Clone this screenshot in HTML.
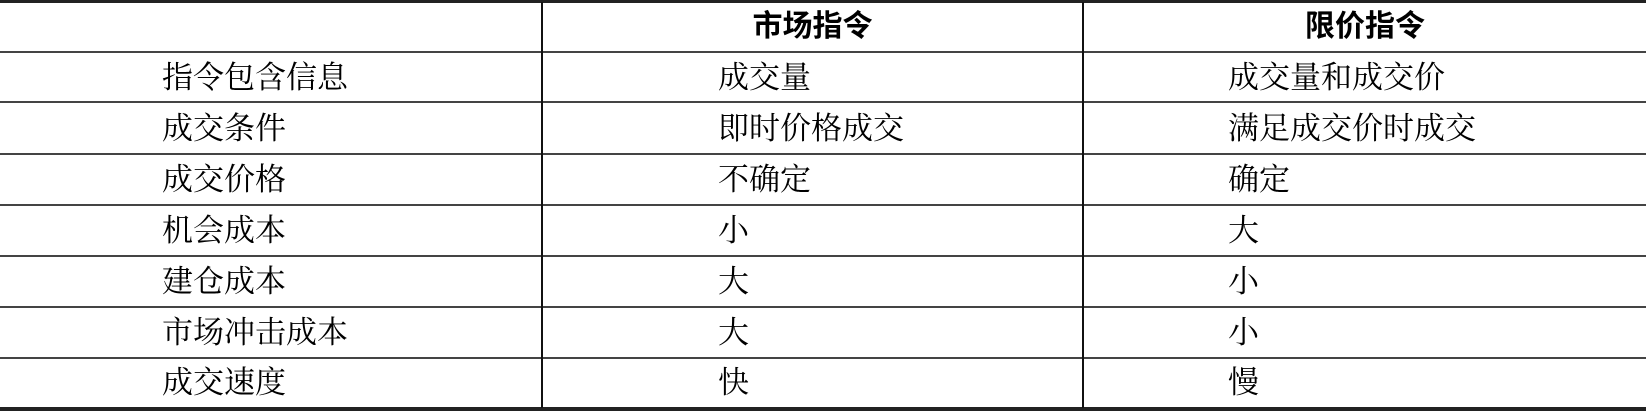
<!DOCTYPE html><html><head><meta charset="utf-8"><style>
body{margin:0;width:1646px;height:411px;background:#fff;position:relative;overflow:hidden;font-family:"Liberation Serif","Noto Serif CJK SC",serif;color:#000}
.h{position:absolute;left:0;width:1646px;background:#222}
.v{position:absolute;width:2px;background:#111;top:2px;height:406px}
.t{position:absolute;font-size:31px;line-height:51px;white-space:nowrap}
.b{font-family:"Liberation Sans","Noto Sans CJK SC",sans-serif;font-weight:bold;font-size:30px}
</style></head><body>
<div class="h" style="top:0;height:3px"></div>
<div class="h" style="top:51px;height:2px;background:#444"></div>
<div class="h" style="top:101px;height:2px;background:#444"></div>
<div class="h" style="top:153px;height:2px;background:#444"></div>
<div class="h" style="top:204px;height:2px;background:#444"></div>
<div class="h" style="top:255px;height:2px;background:#444"></div>
<div class="h" style="top:306px;height:2px;background:#444"></div>
<div class="h" style="top:357px;height:2px;background:#444"></div>
<div class="h" style="top:407px;height:4px"></div>
<div class="v" style="left:541px"></div>
<div class="v" style="left:1082px"></div>
<div class="t b" style="top:1px;left:543px;width:539px;text-align:center">市场指令</div>
<div class="t b" style="top:1px;left:1084px;width:562px;text-align:center">限价指令</div>
<div class="t" style="top:52px;left:162px">指令包含信息</div><div class="t" style="top:52px;left:718px">成交量</div><div class="t" style="top:52px;left:1228px">成交量和成交价</div>
<div class="t" style="top:103px;left:162px">成交条件</div><div class="t" style="top:103px;left:718px">即时价格成交</div><div class="t" style="top:103px;left:1228px">满足成交价时成交</div>
<div class="t" style="top:154px;left:162px">成交价格</div><div class="t" style="top:154px;left:718px">不确定</div><div class="t" style="top:154px;left:1228px">确定</div>
<div class="t" style="top:205px;left:162px">机会成本</div><div class="t" style="top:205px;left:718px">小</div><div class="t" style="top:205px;left:1228px">大</div>
<div class="t" style="top:256px;left:162px">建仓成本</div><div class="t" style="top:256px;left:718px">大</div><div class="t" style="top:256px;left:1228px">小</div>
<div class="t" style="top:307px;left:162px">市场冲击成本</div><div class="t" style="top:307px;left:718px">大</div><div class="t" style="top:307px;left:1228px">小</div>
<div class="t" style="top:357px;left:162px">成交速度</div><div class="t" style="top:357px;left:718px">快</div><div class="t" style="top:357px;left:1228px">慢</div>
</body></html>
